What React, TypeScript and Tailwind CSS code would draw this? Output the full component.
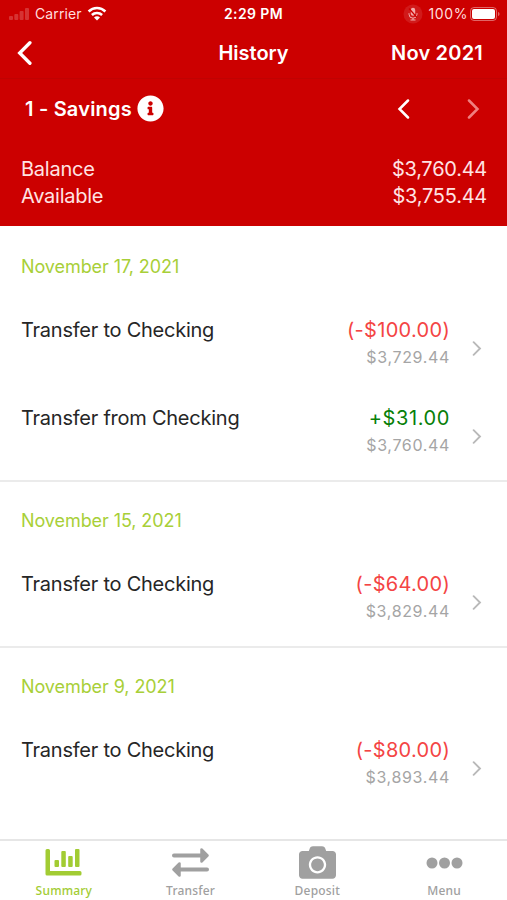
import { useState } from 'react';
import { FaCamera, FaInfoCircle } from 'react-icons/fa';

interface Transaction {
  title: string;
  amount: string;
  balance: string;
  credit?: boolean;
}

interface Day {
  date: string;
  items: Transaction[];
}

const days: Day[] = [
  {
    date: 'November 17, 2021',
    items: [
      { title: 'Transfer to Checking', amount: '(-$100.00)', balance: '$3,729.44' },
      { title: 'Transfer from Checking', amount: '+$31.00', balance: '$3,760.44', credit: true },
    ],
  },
  {
    date: 'November 15, 2021',
    items: [{ title: 'Transfer to Checking', amount: '(-$64.00)', balance: '$3,829.44' }],
  },
  {
    date: 'November 9, 2021',
    items: [{ title: 'Transfer to Checking', amount: '(-$80.00)', balance: '$3,893.44' }],
  },
];

function Chevron({ left, className }: { left?: boolean; className: string }) {
  return (
    <svg viewBox="0 0 12 20" fill="none" stroke="currentColor" strokeLinecap="round" className={className}>
      <path d={left ? 'M10.5 1.5 2 10l8.5 8.5' : 'M1.5 1.5 10 10l-8.5 8.5'} />
    </svg>
  );
}

function StatusBar() {
  return (
    <div className="grid h-[27px] grid-cols-3 items-center px-[7px] text-[14px] text-white">
      <div className="flex items-center">
        <svg width="22" height="14" viewBox="0 0 22 14" fill="#fff" fillOpacity="0.2" className="ml-px">
          <rect x="1" y="9" width="4" height="4" rx="1" />
          <rect x="6.3" y="7" width="4" height="6" rx="1" />
          <rect x="11.6" y="4" width="4" height="9" rx="1" />
          <rect x="17" y="1" width="4" height="12" rx="1" />
        </svg>
        <span className="ml-[5px] tracking-[0.1px] text-[#ffdede]">Carrier</span>
        <svg width="20" height="15" viewBox="0 0 20 15" fill="none" stroke="#fff" strokeWidth="2.5" className="ml-[5px]">
          <path d="M1.6 5.5a12 12 0 0 1 16.8 0" />
          <path d="M4.9 9a7.2 7.2 0 0 1 10.2 0" />
          <path d="m10 14.4-3-3a4.2 4.2 0 0 1 6 0z" fill="#fff" stroke="none" />
        </svg>
      </div>
      <span className="text-center font-semibold tracking-[0.4px]">2:29 PM</span>
      <div className="flex items-center justify-end">
        <svg width="20" height="20" viewBox="0 0 20 20" fill="none" stroke="#f3aaaa" strokeWidth="1">
          <circle cx="10" cy="10" r="9.5" fill="#d11a1a" stroke="none" />
          <rect x="7.8" y="3.8" width="4.4" height="8" rx="2.2" fill="#f3aaaa" stroke="none" />
          <path d="M6 9.2v1a4 4 0 0 0 8 0v-1M10 14.2V16M7.5 16h5" />
          <path d="m6 4.5 8 9" stroke="#cc0000" strokeWidth="1.2" />
        </svg>
        <span className="ml-[5px] tracking-[0.6px] text-[#ffdede]">100%</span>
        <svg width="30" height="14" viewBox="0 0 30 14" className="ml-[2px]">
          <rect x="0.5" y="0.5" width="26" height="13" rx="3.5" fill="none" stroke="#fff" strokeOpacity="0.4" />
          <rect x="2" y="2" width="23" height="10" rx="2" fill="#fff" />
          <path d="M28 5c2 .6 2 3.4 0 4z" fill="#fff" fillOpacity="0.4" />
        </svg>
      </div>
    </div>
  );
}

function Row({ item }: { item: Transaction }) {
  return (
    <div className="flex h-[88px] pl-[21px] pr-[25px]">
      <span className="mt-[14px] flex-1 text-[20px] leading-6 tracking-[-0.24px] text-[#262626]">{item.title}</span>
      <div className="mt-[14px] text-right">
        <div className={`text-[20px] leading-6 ${item.credit ? 'tracking-[0.6px] text-[#087f08]' : 'tracking-[0.3px] text-[#f44444]'}`}>
          {item.amount}
        </div>
        <div className="mt-[5px] text-[16px] leading-5 tracking-[0.65px] text-[#a5a5a5]">{item.balance}</div>
      </div>
      <Chevron className="ml-[22px] mt-[37px] h-[15px] w-[10px] stroke-[2.5] text-[#b9b9b9]" />
    </div>
  );
}

const tabs = [
  {
    label: 'Summary',
    icon: (
      <svg width="37" height="29" viewBox="0 0 37 29" fill="currentColor">
        <path d="M2 1h1.5A1.5 1.5 0 0 1 5 2.5V23h30a1.500 1.500 0 0 1 1.500 1.500V26a1.500 1.500 0 0 1-1.500 1.500H2A1.500 1.500 0 0 1 .5 26V2.500A1.500 1.500 0 0 1 2 1z" />
        <rect x="9.5" y="12" width="4.5" height="7" rx="1" />
        <rect x="16.3" y="3" width="4.5" height="16" rx="1" />
        <rect x="23.2" y="8" width="4.5" height="11" rx="1" />
        <rect x="30" y="1" width="4.5" height="18" rx="1" />
      </svg>
    ),
  },
  {
    label: 'Transfer',
    icon: (
      <svg width="37" height="29" viewBox="0 0 37 29" fill="currentColor" stroke="currentColor" strokeLinecap="round" strokeLinejoin="round">
        <path d="M2 7.5h27M8 21.5h27" strokeWidth="4" />
        <path d="M29.5 1.5v12l6-6zM7.5 15.5v12l-6-6z" strokeWidth="2.5" />
      </svg>
    ),
  },
  { label: 'Deposit', icon: <FaCamera size={37} /> },
  {
    label: 'Menu',
    icon: (
      <svg width="37" height="12" viewBox="0 0 37 12" fill="currentColor">
        <circle cx="6" cy="6" r="5.5" />
        <circle cx="18.5" cy="6" r="5.5" />
        <circle cx="31" cy="6" r="5.5" />
      </svg>
    ),
  },
];

export default function App() {
  const [active, setActive] = useState('Summary');

  return (
    <div className="flex h-[900px] w-[507px] flex-col overflow-hidden bg-white font-['Inter',sans-serif]">
      <header className="h-[226px] shrink-0 bg-[#cc0000] text-white">
        <StatusBar />
        <div className="grid h-[52px] grid-cols-3 items-center border-b border-[#c00202] px-[17px] text-[20px] font-semibold">
          <button aria-label="Back">
            <Chevron left className="h-[24px] w-[15px] stroke-[2.8]" />
          </button>
          <h1 className="text-center">History</h1>
          <span className="whitespace-nowrap pr-[7px] text-right tracking-[0.2px]">Nov 2021</span>
        </div>
        <div className="flex h-[59px] items-center pl-[25px] pr-[27px]">
          <span className="text-[20px] font-semibold tracking-[0.2px]">1 - Savings</span>
          <FaInfoCircle size={27} className="ml-[5px]" />
          <Chevron left className="ml-auto h-5 w-[13px] stroke-[2.5]" />
          <Chevron className="ml-[57px] h-5 w-[13px] stroke-[2.5] text-[#f08080]" />
        </div>
        <div className="mt-[18px] pl-[21px] pr-[20px] text-[20px] leading-[27px] tracking-[-0.25px] text-[#ffe3e3]">
          <div className="flex justify-between">
            <span>Balance</span>
            <span>$3,760.44</span>
          </div>
          <div className="flex justify-between">
            <span>Available</span>
            <span>$3,755.44</span>
          </div>
        </div>
      </header>

      <main className="flex-1 pt-[2px]">
        {days.map((day) => (
          <section key={day.date} className="border-b-2 border-[#ebebeb] last:border-0">
            <h2 className="flex h-[76px] items-center pl-[21px] text-[18px] tracking-[-0.08px] text-[#a8cf38]">{day.date}</h2>
            {day.items.map((item) => (
              <Row key={item.title} item={item} />
            ))}
          </section>
        ))}
      </main>

      <nav className="grid h-[61px] shrink-0 grid-cols-4 border-t-2 border-[#e6e6e6] bg-white">
        {tabs.map((tab) => (
          <button
            key={tab.label}
            onClick={() => setActive(tab.label)}
            className={`flex flex-col items-center pl-px ${active === tab.label ? 'text-[#a2cc33]' : 'text-[#a0a0a0]'}`}
          >
            <span className="flex h-[43px] items-center justify-center">{tab.icon}</span>
            <span className="font-['Noto_Sans',sans-serif] text-[12px] font-medium leading-[14px] tracking-[0.2px]">{tab.label}</span>
          </button>
        ))}
      </nav>
    </div>
  );
}
